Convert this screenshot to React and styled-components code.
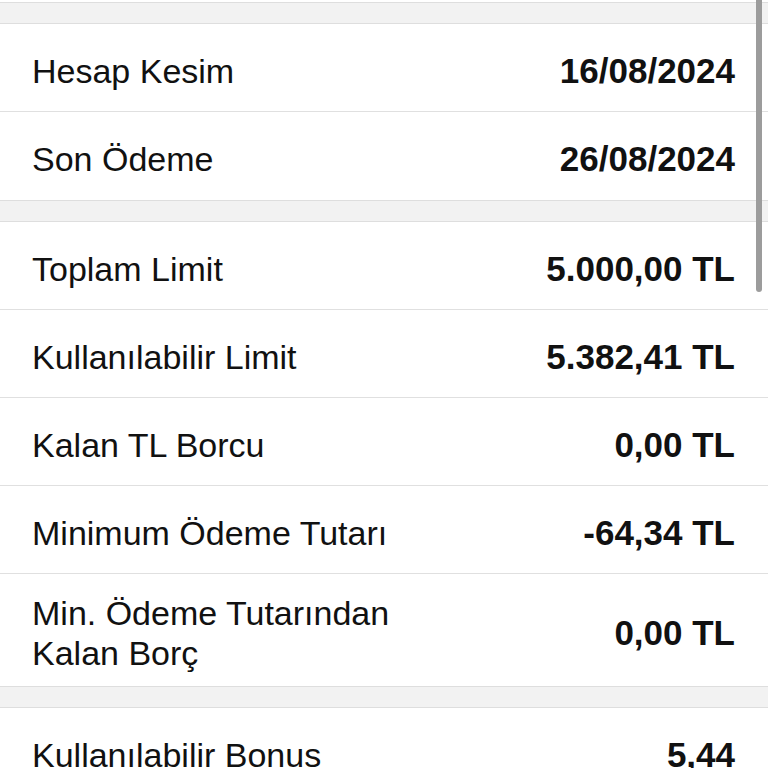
import React from "react";
import styled, { createGlobalStyle } from "styled-components";

const GlobalStyle = createGlobalStyle`
  html, body {
    margin: 0;
    padding: 0;
    background: #fff;
    overflow: hidden;
  }
  body {
    font-family: "Liberation Sans", Arial, Helvetica, sans-serif;
    color: #111;
    -webkit-font-smoothing: antialiased;
  }
`;

const Page = styled.div`
  position: relative;
  width: 768px;
  height: 768px;
  overflow: hidden;
  background: #fff;
  padding-top: 2px;
  box-sizing: border-box;
`;

const SectionGap = styled.div`
  height: 20px;
  background: #f2f2f2;
  border-top: 1px solid #dedede;
  border-bottom: 1px solid #dedede;
`;

const Section = styled.section`
  background: #fff;
`;

const Row = styled.div`
  display: flex;
  align-items: center;
  justify-content: space-between;
  box-sizing: border-box;
  min-height: 88px;
  padding: 19px 33px 13px 32px;
  border-bottom: ${(p) => (p.last ? "none" : "1px solid #e0e0e0")};
`;

const Label = styled.span`
  font-size: 34px;
  line-height: 40px;
  font-weight: 400;
  color: #111;
  max-width: 410px;
`;

const Value = styled.span`
  font-size: 35px;
  line-height: 40px;
  font-weight: 700;
  color: #111;
  text-align: right;
  white-space: nowrap;
`;

const ScrollThumb = styled.div`
  position: absolute;
  top: 0;
  right: 6px;
  width: 6px;
  height: 292px;
  border-radius: 0 0 3px 3px;
  background: #9c9c9c;
`;

const groups = [
  [
    ["Hesap Kesim", "16/08/2024"],
    ["Son Ödeme", "26/08/2024"],
  ],
  [
    ["Toplam Limit", "5.000,00 TL"],
    ["Kullanılabilir Limit", "5.382,41 TL"],
    ["Kalan TL Borcu", "0,00 TL"],
    ["Minimum Ödeme Tutarı", "-64,34 TL"],
    ["Min. Ödeme Tutarından Kalan Borç", "0,00 TL"],
  ],
  [["Kullanılabilir Bonus", "5,44"]],
];

export default function App() {
  return (
    <>
      <GlobalStyle />
      <Page>
        {groups.map((rows, i) => (
          <React.Fragment key={i}>
            <SectionGap />
            <Section>
              {rows.map(([label, value], j) => (
                <Row key={label} last={j === rows.length - 1}>
                  <Label>{label}</Label>
                  <Value>{value}</Value>
                </Row>
              ))}
            </Section>
          </React.Fragment>
        ))}
        <ScrollThumb />
      </Page>
    </>
  );
}
